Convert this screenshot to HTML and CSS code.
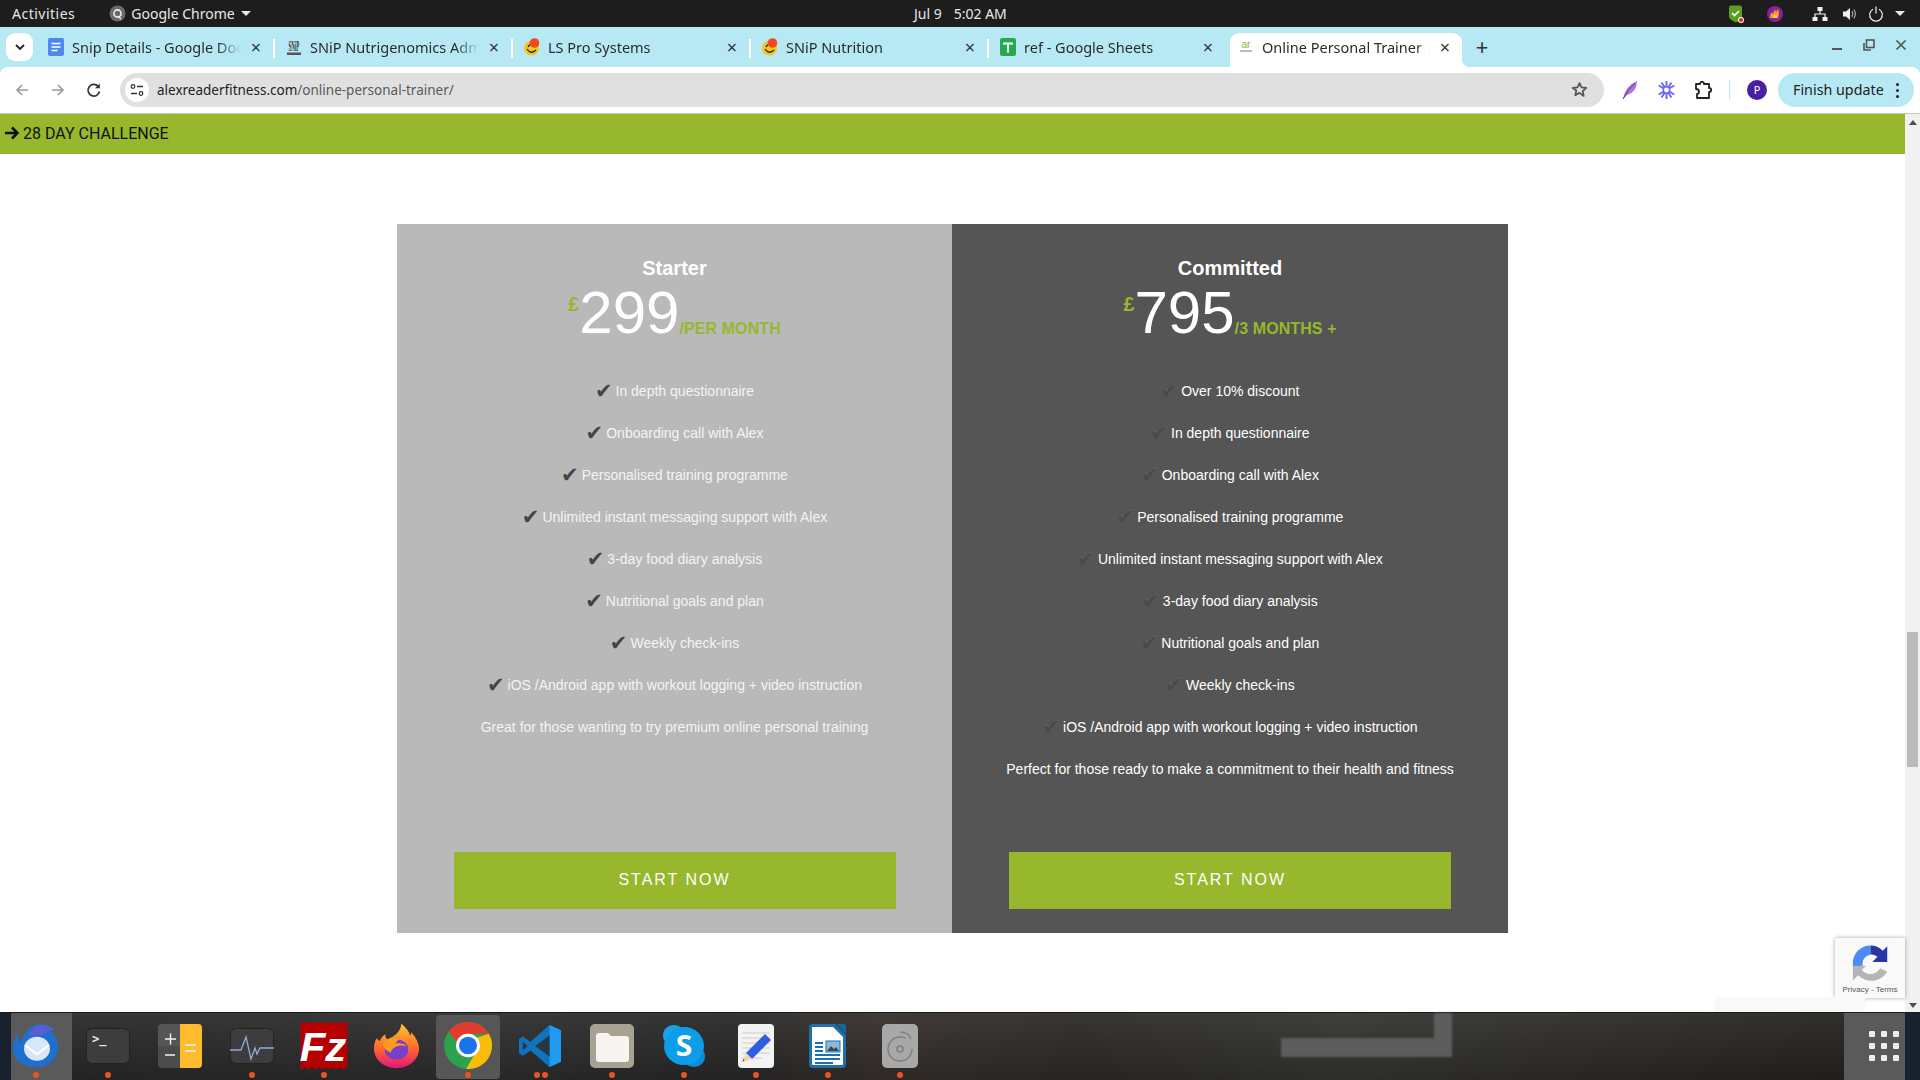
FILE: index.html
```html
<!DOCTYPE html>
<html lang="en">
<head>
<meta charset="utf-8">
<title>Online Personal Trainer</title>
<link rel="stylesheet" href="styles.css">
</head>
<body>
<div class="screen">
  <header class="topbar">
    <div class="top-left">
      <span class="activities">Activities</span>
      <span class="app-menu">
        <svg width="17" height="17" viewBox="0 0 17 17"><circle cx="8.5" cy="8.5" r="8" fill="#6a6a6a"/><circle cx="8.5" cy="8.5" r="3.6" fill="none" stroke="#eee" stroke-width="1.6"/><path d="M10 12l2 2" stroke="#eee" stroke-width="1.4"/></svg>
        <span>Google Chrome</span>
        <i class="caret"></i>
      </span>
    </div>
    <div class="clock"><span>Jul 9</span><span>5:02 AM</span></div>
    <div class="tray">
      <svg class="tray-a" width="18" height="18" viewBox="0 0 18 18"><path d="M2 2.5q0-2 2-2h9q2 0 2 2v9q0 3-6 6q-7-3-7-6z" fill="#5c9e1e"/><path d="M5 8l2.5 2.5L12 6" fill="none" stroke="#fff" stroke-width="1.6"/><circle cx="14" cy="15" r="3" fill="#fff"/><circle cx="14" cy="15" r="2" fill="#e3271c"/></svg>
      <svg class="tray-b" width="16" height="18" viewBox="0 0 16 18"><circle cx="8" cy="9" r="8" fill="#8a1ea0"/><path d="M3 13q0-4 2-6l1 2 2-5 1 3 2-3q2 5 0 9z" fill="#ff9a1f"/><path d="M6 13l1-4 2 2 1-2v4z" fill="#ffd84a"/></svg>
      <svg class="tray-c" width="16" height="16" viewBox="0 0 16 16"><g fill="#f0f0f0"><rect x="5.5" y="1" width="5" height="4"/><rect x="0.5" y="11" width="5" height="4"/><rect x="10.5" y="11" width="5" height="4"/></g><path d="M8 5v3M3 11V8h10v3" fill="none" stroke="#f0f0f0" stroke-width="1.2"/></svg>
      <svg class="tray-d" width="16" height="16" viewBox="0 0 16 16"><path d="M1 5.5h3L8 2v12L4 10.5H1z" fill="#f0f0f0"/><path d="M10 5q1.5 3 0 6M12 3.5q2.600 4.500 0 9" fill="none" stroke="#aaa" stroke-width="1.200"/></svg>
      <svg class="tray-e" width="16" height="16" viewBox="0 0 16 16"><path d="M5 3.300a6.300 6.300 0 1 0 6 0M8 0.500v7" fill="none" stroke="#f0f0f0" stroke-width="1.200"/></svg>
      <i class="caret caret-tray"></i>
    </div>
  </header>

  <div class="chrome">
    <div class="tabstrip">
      <button class="tab-search" type="button"><svg width="10" height="7" viewBox="0 0 10 7"><path d="M1 1l4 4 4-4" fill="none" stroke="#222" stroke-width="1.800"/></svg></button>
      <div class="tab">
        <svg class="fav" width="16" height="18" viewBox="0 0 16 18"><rect width="16" height="18" rx="2" fill="#4d88ee"/><path d="M3.500 5.500h9M3.500 9h9M3.500 12.500h6" stroke="#fff" stroke-width="1.500"/></svg>
        <span class="tab-title">Snip Details - Google Docs</span>
        <span class="tab-x">×</span>
      </div>
      <div class="tab">
        <svg class="fav" width="16" height="18" viewBox="0 0 16 18"><text class="snip-fav" transform="scale(.75,2.200)" x="10.500" y="5.800" text-anchor="middle">SNiP</text><rect x="1" y="14.500" width="14" height="2.500" fill="#555"/></svg>
        <span class="tab-title">SNiP Nutrigenomics Admin</span>
        <span class="tab-x">×</span>
      </div>
      <div class="tab">
        <svg class="fav" width="16" height="18" viewBox="0 0 16 18"><circle cx="7.500" cy="10" r="7.500" fill="#f2c81f"/><path d="M3 11q4 6 9 1M4 9q2-4 6-3" fill="none" stroke="#222" stroke-width="1.300"/><circle cx="10.500" cy="5" r="4.800" fill="#f04a21"/></svg>
        <span class="tab-title">LS Pro Systems</span>
        <span class="tab-x">×</span>
      </div>
      <div class="tab">
        <svg class="fav" width="16" height="18" viewBox="0 0 16 18"><circle cx="7.500" cy="10" r="7.500" fill="#f2c81f"/><path d="M3 11q4 6 9 1M4 9q2-4 6-3" fill="none" stroke="#222" stroke-width="1.300"/><circle cx="10.500" cy="5" r="4.800" fill="#f04a21"/></svg>
        <span class="tab-title">SNiP Nutrition</span>
        <span class="tab-x">×</span>
      </div>
      <div class="tab">
        <svg class="fav" width="16" height="18" viewBox="0 0 16 18"><rect width="16" height="18" rx="2" fill="#27a853"/><path d="M3 5.500h10M8 5.500v9" stroke="#fff" stroke-width="1.800"/></svg>
        <span class="tab-title">ref - Google Sheets</span>
        <span class="tab-x">×</span>
      </div>
      <div class="tab tab-active">
        <svg class="fav" width="16" height="16" viewBox="0 0 16 16"><text class="ar-fav" x="8" y="8.500" text-anchor="middle">ar</text><rect x="2" y="11" width="12" height="2" fill="#bbb"/></svg>
        <span class="tab-title">Online Personal Trainer | Alex</span>
        <span class="tab-x">×</span>
      </div>
      <span class="new-tab">+</span>
      <div class="window-controls">
        <svg width="12" height="12" viewBox="0 0 12 12"><rect x="1" y="9" width="10" height="2" fill="#555"/></svg>
        <svg width="12" height="12" viewBox="0 0 12 12"><rect x="3.500" y="1" width="7.500" height="7.500" fill="none" stroke="#555" stroke-width="1.600"/><path d="M1 4v7h7" fill="none" stroke="#555" stroke-width="1.600"/></svg>
        <svg width="12" height="12" viewBox="0 0 12 12"><path d="M1.500 1.500l9 9M10.500 1.500l-9 9" stroke="#555" stroke-width="1.700"/></svg>
      </div>
    </div>
    <div class="toolbar">
      <svg class="nav-ic" width="16" height="16" viewBox="0 0 16 16"><path d="M14 8H3M8 3L3 8l5 5" fill="none" stroke="#999" stroke-width="1.600"/></svg>
      <svg class="nav-ic" width="16" height="16" viewBox="0 0 16 16"><path d="M2 8h11M8 3l5 5-5 5" fill="none" stroke="#999" stroke-width="1.600"/></svg>
      <svg class="nav-ic" width="16" height="16" viewBox="0 0 16 16"><path d="M13.500 9.500A5.800 5.800 0 1 1 12 4.200" fill="none" stroke="#333" stroke-width="1.700"/><path d="M13.800 1.500v4.700H9.100z" fill="#333"/></svg>
      <div class="omnibox">
        <span class="site-info"><svg width="14" height="12" viewBox="0 0 14 12"><circle cx="3" cy="2.500" r="1.800" fill="none" stroke="#333" stroke-width="1.200"/><path d="M7 2.500h6M1 9.500h6" stroke="#333" stroke-width="1.400"/><circle cx="11" cy="9.500" r="1.800" fill="none" stroke="#333" stroke-width="1.200"/></svg></span>
        <span class="url"><span class="url-host">alexreaderfitness.com</span>/online-personal-trainer/</span>
        <svg class="star" width="17" height="17" viewBox="0 0 24 24"><path d="M12 2.800l2.800 6.300 6.800.7-5.100 4.600 1.500 6.800L12 16.700l-6 3.500 1.500-6.800L2.400 9.800l6.800-.7z" fill="none" stroke="#555" stroke-width="2.400" stroke-linejoin="round"/></svg>
      </div>
      <div class="ext-row">
        <svg class="ext-feather" width="16" height="20" viewBox="0 0 16 20"><path d="M1 19Q3 6 15 1 15 12 5 15z" fill="#a77bd6"/><path d="M1 19Q6 9 13 3" fill="none" stroke="#6c2bb0" stroke-width="1"/></svg>
        <svg class="ext-snow" width="17" height="18" viewBox="0 0 17 18"><g stroke="#6a63f5" stroke-width="1.900"><path d="M8.500 0v18M0.700 4.500l15.600 9M16.300 4.500l-15.600 9M3.500 1.500l10 15M13.500 1.500l-10 15"/></g><circle cx="8.500" cy="9" r="3.200" fill="#fff" stroke="#6a63f5" stroke-width="1.500"/></svg>
        <svg class="ext-puzzle" width="18" height="18" viewBox="0 0 18 18"><path d="M2 3h4q0-2.200 2-2.200T10 3h5v4q2.200 0 2.200 2T15 11v6H3v-4q2 0 2-2.500T2 8z" fill="none" stroke="#222" stroke-width="1.800" stroke-linejoin="round"/></svg>
        <i class="ext-sep"></i>
        <span class="avatar">P</span>
      </div>
      <div class="update-pill"><span>Finish update</span><i class="kebab"></i></div>
    </div>
  </div>

  <div class="viewport">
    <main class="page">
      <nav class="promo"><svg width="14" height="14" viewBox="0 0 14 14"><path d="M0 7h12M7 1.500L12.500 7 7 12.500" fill="none" stroke="#111" stroke-width="2.600"/></svg><span>28 DAY CHALLENGE</span></nav>
      <section class="pricing">
        <article class="plan plan-light">
          <h2 class="plan-name">Starter</h2>
          <p class="price"><sup class="cur">£</sup><span class="amount">299</span><span class="term">/PER MONTH</span></p>
          <ul class="features">
            <li><span class="tick">✔</span>In depth questionnaire</li>
            <li><span class="tick">✔</span>Onboarding call with Alex</li>
            <li><span class="tick">✔</span>Personalised training programme</li>
            <li><span class="tick">✔</span>Unlimited instant messaging support with Alex</li>
            <li><span class="tick">✔</span>3-day food diary analysis</li>
            <li><span class="tick">✔</span>Nutritional goals and plan</li>
            <li><span class="tick">✔</span>Weekly check-ins</li>
            <li><span class="tick">✔</span>iOS /Android app with workout logging + video instruction</li>
            <li>Great for those wanting to try premium online personal training</li>
          </ul>
          <a class="cta">START NOW</a>
        </article>
        <article class="plan plan-dark">
          <h2 class="plan-name">Committed</h2>
          <p class="price"><sup class="cur">£</sup><span class="amount">795</span><span class="term">/3 MONTHS +</span></p>
          <ul class="features">
            <li><span class="tick">✔</span>Over 10% discount</li>
            <li><span class="tick">✔</span>In depth questionnaire</li>
            <li><span class="tick">✔</span>Onboarding call with Alex</li>
            <li><span class="tick">✔</span>Personalised training programme</li>
            <li><span class="tick">✔</span>Unlimited instant messaging support with Alex</li>
            <li><span class="tick">✔</span>3-day food diary analysis</li>
            <li><span class="tick">✔</span>Nutritional goals and plan</li>
            <li><span class="tick">✔</span>Weekly check-ins</li>
            <li><span class="tick">✔</span>iOS /Android app with workout logging + video instruction</li>
            <li>Perfect for those ready to make a commitment to their health and fitness</li>
          </ul>
          <a class="cta">START NOW</a>
        </article>
      </section>
      <div class="recaptcha">
        <svg width="37" height="38" viewBox="0 0 42 42">
          <path d="M21 1A20 20 0 0 0 1 21v5h11v-5a9 9 0 0 1 9-9z" fill="#4c8bf5"/>
          <path d="M21 1a20 20 0 0 1 14 6l5-5v18H23l6-6a12 12 0 0 0-8-3z" fill="#2a35a8"/>
          <path d="M1 24h15l-5 5a13 13 0 0 0 21-2l8 4a21 21 0 0 1-33 4l-6 6z" fill="#b5b5b5"/>
        </svg>
        <span>Privacy - Terms</span>
      </div>
      <div class="under-badge"></div>
    </main>
    <aside class="scrollbar">
      <i class="arrow-up"></i>
      <div class="track"><div class="thumb"></div></div>
      <i class="arrow-down"></i>
    </aside>
  </div>

  <footer class="dock">
    <i class="wall-frame"></i>
    <div class="dock-item thunder">
      <svg width="48" height="46" viewBox="0 0 48 50" preserveAspectRatio="none"><path d="M24 2c8-2 16 1 19 6-3-1-5-1-6 0 6 5 9 11 9 18 0 13-10 22-22 22S1 40 1 28C1 20 3 15 6 12c0 5 1 8 3 10C11 12 16 5 24 2z" fill="#1f6fd0"/><path d="M24 3c7-2 14 0 18 5-5 0-9 2-12 6-5-2-10-1-14 2 1-5 4-10 8-13z" fill="#5a5fd0"/><circle cx="25" cy="28" r="13" fill="#d9e8f8"/><path d="M13 24l12 10 12-10" fill="none" stroke="#fff" stroke-width="2"/></svg>
      <i class="dot"></i>
    </div>
    <div class="dock-item">
      <svg width="44" height="36" viewBox="0 0 44 36"><rect x="0.500" y="0.500" width="43" height="35" rx="6" fill="#3d3d3d" stroke="#222"/><text class="term-text" x="6" y="15">&gt;_</text></svg>
      <i class="dot"></i>
    </div>
    <div class="dock-item">
      <svg width="44" height="44" viewBox="0 0 44 44"><rect width="44" height="44" rx="4" fill="#4b4b4b"/><path d="M22 22V0H4Q0 0 0 4v18z" fill="#555"/><path d="M22 0h18q4 0 4 4v36q0 4-4 4H22z" fill="#fdbc2c"/><path d="M7 15h11M12.500 9.500v11M7 31h10M27 21h11M27 27h11" stroke="#f4f4f4" stroke-width="1.400"/></svg>
    </div>
    <div class="dock-item">
      <svg width="44" height="36" viewBox="0 0 44 36"><rect x="0.500" y="0.500" width="43" height="35" rx="6" fill="#3d3d3d" stroke="#222"/><path d="M0 22h11l5-13 5 22 4-11 2 6 3-6h14" fill="none" stroke="#92a9dc" stroke-width="1.300"/></svg>
      <i class="dot"></i>
    </div>
    <div class="dock-item">
      <svg width="48" height="47" viewBox="0 0 48 48" preserveAspectRatio="none"><rect x="1.500" y="1.500" width="45" height="45" fill="#b60000" stroke="#b60000" stroke-width="3" stroke-dasharray="4 3"/><text class="fz-text" x="23" y="40" text-anchor="middle">Fz</text></svg>
      <i class="dot"></i>
    </div>
    <div class="dock-item">
      <svg width="45" height="46" viewBox="0 0 46 54" preserveAspectRatio="none"><defs><linearGradient id="ff" x1="0" y1="0" x2="0" y2="1"><stop offset="0" stop-color="#ffc52e"/><stop offset=".55" stop-color="#ff6a2b"/><stop offset="1" stop-color="#e5147a"/></linearGradient></defs><path d="M28 1c5 5 8 9 9 14 1-2 1-3 1-4 5 6 8 13 8 19 0 13-10 23-23 23S0 43 0 30c0-5 1-9 3-12 1 2 2 3 3 3 1-3 3-6 6-8-1 3 0 5 2 6 6-3 13-7 14-18z" fill="url(#ff)"/><circle cx="23" cy="31" r="12" fill="#7a3fc8"/><path d="M9 25c3-7 11-9 18-6-3 1-4 3-5 5 5-1 9 0 11 3-7-2-14 0-16 8-4-2-7-5-8-10z" fill="#ff9a1f"/></svg>
    </div>
    <div class="dock-item hovered">
      <svg width="48" height="47" viewBox="0 0 48 48" preserveAspectRatio="none"><circle cx="24" cy="24" r="24" fill="#2ba24c"/><path d="M24 0a24 24 0 0 1 20.800 12H24a12 12 0 0 0-11.400 8.300L4.500 10A24 24 0 0 1 24 0z" fill="#e13c2f"/><path d="M44.800 12A24 24 0 0 1 22 48l10-17.500a12 12 0 0 0 .800-14.500z" fill="#fbbc09"/><circle cx="24" cy="24" r="12" fill="#fff"/><circle cx="24" cy="24" r="9" fill="#1a73e8"/></svg>
      <i class="dot"></i>
    </div>
    <div class="dock-item">
      <svg width="42" height="42" viewBox="0 0 44 48" preserveAspectRatio="none"><path d="M32 0l12 6v36l-12 6L12 29l-8 6-4-3v-16l4-3 8 6z" fill="#0e74bd"/><path d="M32 0l12 6v36l-12 6z" fill="#1f9cf0"/><path d="M32 12v24L17 24z" fill="#2b2b2b" opacity=".85"/><path d="M4 19l5 5-5 5z" fill="#2b2b2b" opacity=".85"/></svg>
      <i class="dot dot-one"></i><i class="dot dot-two"></i>
    </div>
    <div class="dock-item">
      <svg width="44" height="44" viewBox="0 0 44 44"><rect width="44" height="44" rx="5" fill="#a8a293"/><path d="M6 12q0-3 3-3h9l3 3h15q3 0 3 3v20q0 3-3 3H9q-3 0-3-3z" fill="#f6f5f2"/></svg>
      <i class="dot"></i>
    </div>
    <div class="dock-item">
      <svg width="42" height="42" viewBox="0 0 42 44" preserveAspectRatio="none"><circle cx="11" cy="11" r="11" fill="#1da1e6"/><circle cx="31" cy="33" r="11" fill="#0f8bd6"/><circle cx="21" cy="22" r="20" fill="#0c9ee8"/><text class="skype-text" x="21" y="32" text-anchor="middle">S</text></svg>
      <i class="dot"></i>
    </div>
    <div class="dock-item">
      <svg width="36" height="44" viewBox="0 0 36 44"><rect width="36" height="44" rx="4" fill="#f3f3f3"/><path d="M4 9h28M4 14h28M4 19h28M4 24h28M4 29h28M4 34h20" stroke="#ccc"/><path d="M27 10l6 6-19 19-6-6z" fill="#2f5fe0"/><path d="M8 29l6 6-9 3z" fill="#f6d6a8"/><path d="M6.500 36l-2 2 .8-3z" fill="#333"/></svg>
      <i class="dot"></i>
    </div>
    <div class="dock-item">
      <svg width="38" height="46" viewBox="0 0 38 46"><path d="M4 1h22l11 11v29q0 4-4 4H4q-4 0-4-4V5q0-4 4-4z" fill="#1f6fa8"/><path d="M27 1h8q2 0 2 2v8z" fill="#14689f"/><path d="M4 4h20l10 10v27q0 1-1 1H4q-1 0-1-1V5q0-1 1-1z" fill="#fff"/><rect x="6" y="19" width="8" height="2" fill="#1672b8"/><rect x="6" y="23" width="8" height="2" fill="#1672b8"/><rect x="6" y="27" width="8" height="2" fill="#1672b8"/><rect x="17" y="18" width="14" height="11" fill="#8fb8d8" stroke="#1672b8"/><path d="M18 28l4-5 3 3 2-2 3 4z" fill="#444"/><path d="M6 32h25M6 36h25M6 40h18" stroke="#1672b8" stroke-width="2"/></svg>
      <i class="dot"></i>
    </div>
    <div class="dock-item">
      <svg width="36" height="44" viewBox="0 0 36 44"><rect width="36" height="44" rx="5" fill="#a8a8a8"/><circle cx="18" cy="25" r="12" fill="none" stroke="#7f7f7f" stroke-width="1.500" stroke-dasharray="62 14"/><path d="M18 8q9 0 11 7" fill="none" stroke="#7f7f7f" stroke-width="1.500"/><circle cx="18" cy="25" r="3" fill="none" stroke="#7f7f7f" stroke-width="1.500"/></svg>
      <i class="dot"></i>
    </div>
    <div class="dock-apps">
      <div class="apps-grid"><i></i><i></i><i></i><i></i><i></i><i></i><i></i><i></i><i></i></div>
    </div>
    <div class="dock-edge"></div>
  </footer>
</div>
</body>
</html>
```

FILE: styles.css
```css
* { box-sizing: border-box; }
html, body { margin: 0; padding: 0; }
body { width: 1920px; height: 1080px; overflow: hidden; background: #fff; }
.screen { width: 1920px; height: 1080px; display: flex; flex-direction: column; position: relative; overflow: hidden; }

/* GNOME top bar */
.topbar { height: 27px; flex: none; background: #1d1d1d; color: #e8e8e8; font: 14px "Noto Sans", sans-serif; position: relative; display: flex; align-items: center; justify-content: space-between; }
.top-left { display: flex; align-items: center; padding-left: 12px; gap: 34px; }
.activities { letter-spacing: .5px; }
.app-menu { display: flex; align-items: center; gap: 5px; }
.caret { width: 0; height: 0; border: 5px solid transparent; border-top: 5px solid #e8e8e8; border-bottom: 0; display: block; margin-left: 1px; }
.clock { position: absolute; left: 914px; top: 0; height: 27px; display: flex; align-items: center; gap: 12px; }
.tray { display: flex; align-items: center; padding-right: 15px; }
.tray-b { margin-left: 22px; }
.tray-c { margin-left: 29px; }
.tray-d { margin-left: 14px; }
.tray-e { margin-left: 10px; }
.caret-tray { margin-left: 11px; }

/* Chrome frame */
.chrome { flex: none; background: #b6e9f3; color: #2b2b2b; font: 13.5px "Noto Sans", sans-serif; }
.tabstrip { height: 40px; display: flex; align-items: flex-end; position: relative; padding-left: 37px; font-size: 14.5px; }
.tab-search { position: absolute; left: 6px; top: 6px; width: 27px; height: 28px; background: #fff; border: 0; border-radius: 9px; display: flex; align-items: center; justify-content: center; padding: 0; }
.tab { width: 238px; height: 34px; padding: 0 12px 7px 11px; display: flex; align-items: center; gap: 8px; position: relative; }
.tab::after { content: ""; position: absolute; right: 0; top: 6px; width: 2px; height: 19px; background: #fff; }
.tab:nth-child(6)::after, .tab-active::after { display: none; }
.fav { flex: none; }
.tab-title { flex: 1; white-space: nowrap; overflow: hidden; -webkit-mask-image: linear-gradient(to right, #000 86%, transparent 100%); mask-image: linear-gradient(to right, #000 86%, transparent 100%); }
.tab-x { flex: none; width: 14px; text-align: center; font-size: 18px; line-height: 20px; color: #333; }
.tab-active { background: #fff; margin: 0 3px; width: 232px; padding-left: 8px; padding-right: 10px; border-radius: 9px 9px 0 0; }
.tab-active .tab-title { -webkit-mask-image: linear-gradient(to right, #000 92%, transparent 100%); mask-image: linear-gradient(to right, #000 92%, transparent 100%); }
.tab-active::before { content: ""; position: absolute; right: -8px; bottom: 0; width: 8px; height: 8px; background: radial-gradient(circle at 100% 0, transparent 8px, #fff 8.500px); }
.snip-fav { font: bold 6.500px "Liberation Serif", serif; fill: #333; }
.ar-fav { font: 10px "Liberation Sans", sans-serif; fill: #8db53a; }
.new-tab { font-size: 22px; line-height: 27px; width: 34px; text-align: center; color: #333; height: 34px; }
.window-controls { margin-left: auto; height: 40px; display: flex; align-items: center; gap: 20px; padding: 0 13px 4px 0; }

.toolbar { height: 47px; border-bottom: 1px solid #c4c4c4; background: #fff; border-radius: 8px 8px 0 0; display: flex; align-items: center; padding-left: 14px; }
.nav-ic { flex: none; margin-right: 20px; }
.nav-ic:nth-child(3) { margin-right: 18px; }
.omnibox { width: 1484px; height: 34px; background: #e0e0e0; border-radius: 17px; display: flex; align-items: center; padding: 0 16px 0 5px; margin-top: -1px; flex: none; }
.site-info { width: 24px; height: 24px; border-radius: 12px; background: #fff; display: flex; align-items: center; justify-content: center; flex: none; }
.url { margin-left: 8px; flex: 1; color: #5a5a5a; }
.url-host { color: #222; }
.ext-row { display: flex; align-items: center; width: 174px; flex: none; padding-left: 18px; margin-top: -1px; }
.ext-snow { margin-left: 20px; }
.ext-puzzle { margin-left: 19px; }
.ext-sep { width: 1px; height: 20px; background: #b6e9f3; margin-left: 17px; }
.avatar { width: 20px; height: 20px; border-radius: 10px; background: #4a1fa0; color: #fff; font-size: 11px; line-height: 20px; text-align: center; margin-left: 17px; }
.update-pill { width: 136px; height: 34px; border-radius: 17px; background: #b6e9f3; display: flex; align-items: center; padding-left: 15px; position: relative; margin-top: -1px; color: #222; font-size: 14.3px; flex: none; }
.kebab { position: absolute; left: 118px; top: 10px; width: 3px; height: 3px; border-radius: 2px; background: #222; box-shadow: 0 6px 0 #222, 0 12px 0 #222; }

/* Page */
.viewport { flex: 1; min-height: 0; display: flex; background: #fff; position: relative; }
.page { flex: 1; min-width: 0; position: relative; font-family: "Liberation Sans", Arial, sans-serif; }
.promo { height: 40px; background: #97b72d; display: flex; align-items: center; padding: 0 0 2px 5px; gap: 4px; color: #111; font: 16px Roboto, sans-serif; }
.pricing { width: 1111px; margin: 70px 0 0 397px; display: grid; grid-template-columns: 555px 556px; }
.plan { height: 709px; display: flex; flex-direction: column; align-items: center; padding: 32px 56px 24px; color: #fff; }
.plan-light { background: #b9b9b9; }
.plan-dark { background: #555; }
.plan-name { margin: 0; font-size: 20px; line-height: 24px; font-weight: 700; text-align: center; }
.price { margin: 3px 0 0; height: 60px; line-height: 60px; display: flex; align-items: flex-start; justify-content: center; white-space: nowrap; }
.cur { font-size: 20px; font-weight: 700; color: #97b72d; line-height: 20px; margin-top: 11px; vertical-align: baseline; }
.amount { font-size: 60px; line-height: 60px; }
.term { font-size: 16px; font-weight: 700; color: #97b72d; line-height: 20px; margin-top: 36px; letter-spacing: .1px; }
.features { list-style: none; margin: 38px -40px 0; padding: 0; width: 520px; flex: none; font-size: 14px; text-align: center; }
.features li { height: 42px; line-height: 20px; white-space: nowrap; }
.plan-light .features li { color: #f4f4f4; }
.tick { font: 21px/20px "DejaVu Sans", sans-serif; color: #444; margin-right: 3px; vertical-align: -2px; }
.plan-dark .tick { color: #4a4a4a; text-shadow: 1px -1px 1px #666; }
.cta { margin-top: auto; width: 442px; height: 57px; background: #97b72d; color: #fff; font-size: 16px; letter-spacing: 2px; line-height: 55px; text-align: center; flex: none; }

.recaptcha { position: absolute; right: 0; top: 824px; width: 70px; height: 60px; background: #f9f9f9; box-shadow: 0 0 4px rgba(0,0,0,.35); border-radius: 2px 0 0 2px; display: flex; flex-direction: column; align-items: center; padding-top: 6px; }
.recaptcha span { font: 8px "Liberation Sans", sans-serif; color: #555; margin-top: 3px; white-space: nowrap; }
.under-badge { position: absolute; right: 40px; top: 883px; width: 151px; height: 15px; background: #f9f9f9; }

.scrollbar { width: 15px; flex: none; background: #f1f1f1; display: flex; flex-direction: column; align-items: center; }
.arrow-up { width: 0; height: 0; border: 4px solid transparent; border-bottom: 5px solid #505050; border-top: 0; margin: 6px 0; }
.track { flex: 1; width: 15px; position: relative; }
.thumb { position: absolute; left: 2px; top: 501px; width: 11px; height: 135px; background: #bbb; }
.arrow-down { width: 0; height: 0; border: 4px solid transparent; border-top: 5px solid #505050; border-bottom: 0; margin: 6px 0 4px; }

/* Dock */
.dock { height: 68px; flex: none; display: flex; position: relative; border-top: 1px solid #1a1a1a;
  background:
    linear-gradient(to bottom, rgba(70,70,70,.25), rgba(0,0,0,.25)),
    linear-gradient(to right, #2e2e2e 0, #353535 25%, #2e2e2e 38%, #3f3733 46%, #33302c 56%, #3c3c38 70%, #33302b 85%, #2b2824 95%); }
.wall-frame { position: absolute; left: 1281px; top: 0; width: 171px; height: 44px; border: solid #5d5d5d; border-width: 0 18px 19px 0; filter: blur(1px); }
.dock-item { width: 72px; height: 67px; flex: none; display: flex; align-items: center; justify-content: center; position: relative; padding-bottom: 2px; }
.dock-item > svg { position: relative; }
.dot { position: absolute; left: 33px; bottom: 2px; width: 6px; height: 6px; border-radius: 3px; background: #e95420; }
.dot-one { left: 30px; }
.dot-two { left: 38px; }
.thunder::before { content: ""; position: absolute; left: 11px; right: 0; top: 0; bottom: 0; background: #5a5a5a; }
.thunder::after { content: ""; position: absolute; left: 0; width: 11px; top: 0; bottom: 0; background: #18222f; }
.hovered::before { content: ""; position: absolute; left: 4px; top: 2px; width: 64px; height: 64px; border-radius: 4px; background: #565656; }
.term-text { font: bold 12px "DejaVu Sans Mono", monospace; fill: #eee; }
.fz-text { font: italic bold 42px "Liberation Sans", sans-serif; fill: #fff; }
.skype-text { font: bold 30px "Open Sans", sans-serif; fill: #fff; }
.dock-apps { margin-left: auto; width: 61px; background: #5a5a5a; position: relative; }
.apps-grid { position: absolute; left: 25px; top: 18px; display: grid; grid-template-columns: repeat(3, 6px); grid-auto-rows: 6px; gap: 6px; }
.apps-grid i { background: #eee; border-radius: 1px; }
.dock-edge { width: 15px; background: #18222f; }
```
